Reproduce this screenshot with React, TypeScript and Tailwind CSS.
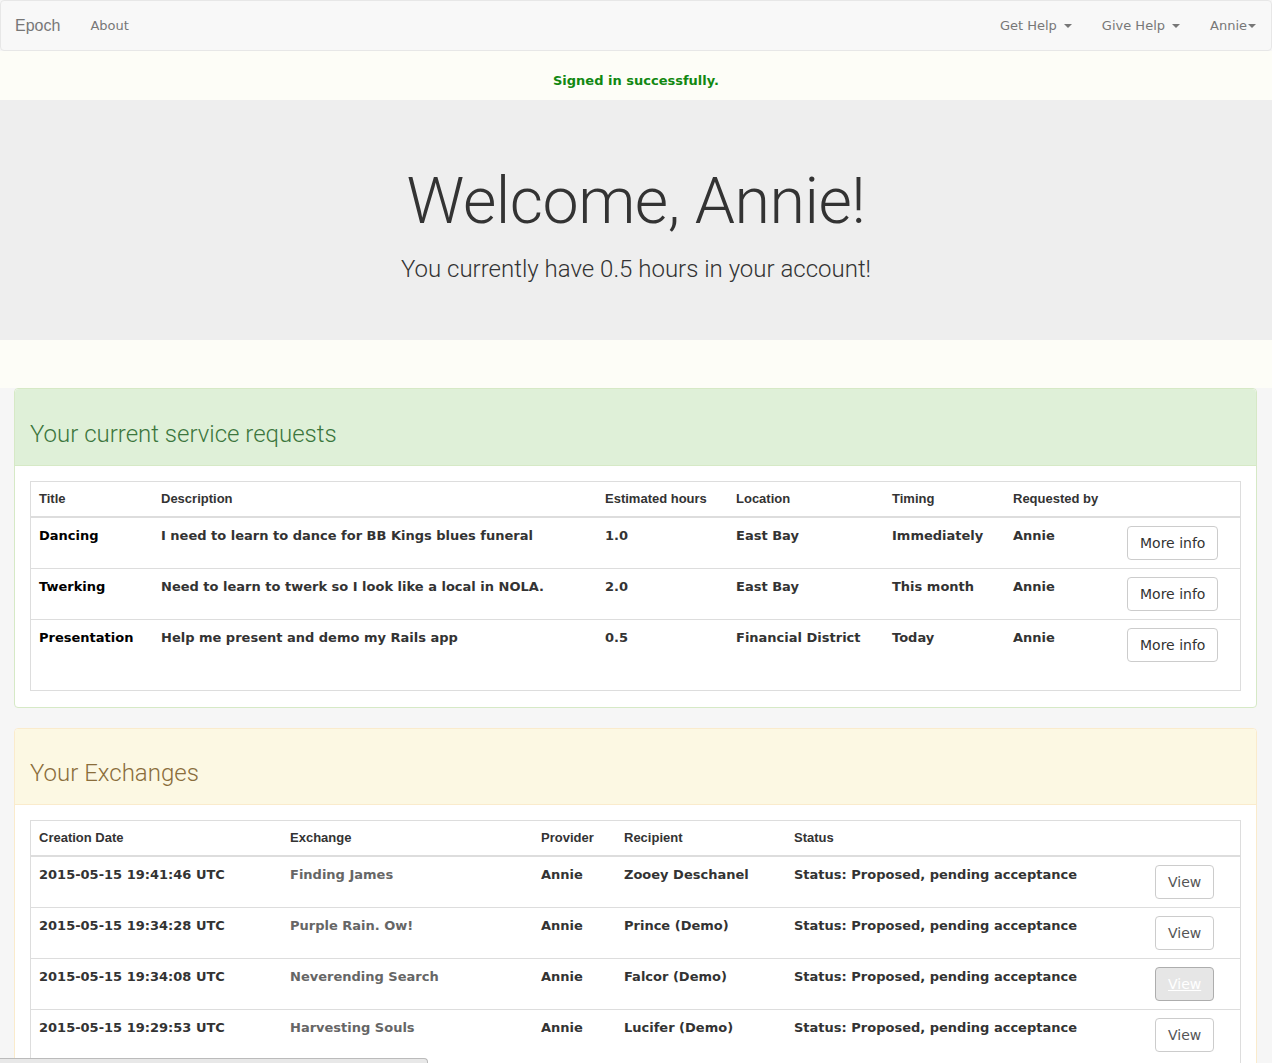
import React from 'react';

const verdana = "font-['DejaVu_Sans',Verdana,sans-serif]";
const helv = "font-['Liberation_Sans',Arial,sans-serif]";

const Caret = () => (
  <span className="ml-[7px] inline-block h-0 w-0 border-x-[4px] border-t-[4px] border-x-transparent border-t-[#777] align-middle" />
);

const requests = [
  { title: 'Dancing', desc: 'I need to learn to dance for BB Kings blues funeral', hours: '1.0', loc: 'East Bay', timing: 'Immediately', by: 'Annie' },
  { title: 'Twerking', desc: 'Need to learn to twerk so I look like a local in NOLA.', hours: '2.0', loc: 'East Bay', timing: 'This month', by: 'Annie' },
  { title: 'Presentation', desc: 'Help me present and demo my Rails app', hours: '0.5', loc: 'Financial District', timing: 'Today', by: 'Annie' },
];

const exchanges = [
  { date: '2015-05-15 19:41:46 UTC', name: 'Finding James', provider: 'Annie', recipient: 'Zooey Deschanel' },
  { date: '2015-05-15 19:34:28 UTC', name: 'Purple Rain. Ow!', provider: 'Annie', recipient: 'Prince (Demo)' },
  { date: '2015-05-15 19:34:08 UTC', name: 'Neverending Search', provider: 'Annie', recipient: 'Falcor (Demo)', active: true },
  { date: '2015-05-15 19:29:53 UTC', name: 'Harvesting Souls', provider: 'Annie', recipient: 'Lucifer (Demo)' },
];

const th = `${helv} text-left text-[13px] font-bold text-[#333] px-2 py-2 border-b-2 border-[#ddd] leading-[18px]`;
const td = `${verdana} align-top text-[13px] font-bold text-[#333] px-2 pt-[9px] pb-2 border-t border-[#ddd] leading-[18px]`;
const btnTd = 'align-top px-2 py-2 border-t border-[#ddd]';

export default function App() {
  return (
    <div className="relative min-h-[1063px] overflow-hidden bg-[#f6f6f6]">
      {/* navbar */}
      <nav className="flex h-[51px] items-center justify-between rounded border border-[#e7e7e7] bg-[#f8f8f8]">
        <div className="flex items-center">
          <span className={`${helv} pl-[14px] pr-[15px] text-[16px] text-[#777]`}>Epoch</span>
          <span className={`${verdana} px-[15px] text-[13px] text-[#777]`}>About</span>
        </div>
        <div className={`${verdana} flex items-center text-[13px] text-[#777]`}>
          <span className="px-[15px]">Get Help<Caret /></span>
          <span className="px-[15px]">Give Help<Caret /></span>
          <span className="pl-[15px] pr-[15px]">Annie<span className="ml-[1px] inline-block h-0 w-0 border-x-[4px] border-t-[4px] border-x-transparent border-t-[#777] align-middle" /></span>
        </div>
      </nav>

      <div className="bg-[#fdfdf7]">
        {/* flash */}
        <div className={`${verdana} flex h-[49px] items-center justify-center pt-[10px] text-[13px] font-bold text-[#118811]`}>
          Signed in successfully.
        </div>

        {/* jumbotron */}
        <div className="flex h-[240px] flex-col items-center bg-[#eeeeee] pt-[63px]">
          <h1 className="font-['Roboto',sans-serif] text-[64.5px] font-light leading-[76px] tracking-[-0.5px] text-[#333]">Welcome, Annie!</h1>
          <p className="mt-[15px] font-['Roboto',sans-serif] text-[24px] font-light leading-[30px] text-[#333]">You currently have 0.5 hours in your account!</p>
        </div>
        <div className="h-[48px]" />
      </div>

      <div className="pl-[14px] pr-[15px]">
        {/* service requests */}
        <section className="mb-[20px] rounded border border-[#d6e9c6] bg-white">
          <div className="flex h-[77px] items-center rounded-t border-b border-[#d6e9c6] bg-[#dff0d8] px-[15px] pt-[13px]">
            <h2 className="font-['Roboto',sans-serif] text-[24px] font-light text-[#3c763d]">Your current service requests</h2>
          </div>
          <div className="px-[15px] pt-[15px] pb-[16px]">
            <div className="border border-[#ddd] pb-[20px]">
              <table className="w-full table-fixed border-collapse">
                <colgroup>
                  <col className="w-[122px]" />
                  <col className="w-[444px]" />
                  <col className="w-[131px]" />
                  <col className="w-[156px]" />
                  <col className="w-[121px]" />
                  <col className="w-[114px]" />
                  <col />
                </colgroup>
                <thead>
                  <tr>
                    <th className={th}>Title</th>
                    <th className={th}>Description</th>
                    <th className={th}>Estimated hours</th>
                    <th className={th}>Location</th>
                    <th className={th}>Timing</th>
                    <th className={th}>Requested by</th>
                    <th className={th}></th>
                  </tr>
                </thead>
                <tbody>
                  {requests.map((r, i) => (
                    <tr key={r.title} className={i === 0 ? '[&>td]:border-t-0' : ''}>
                      <td className={`${td} text-black`}>{r.title}</td>
                      <td className={td}>{r.desc}</td>
                      <td className={td}>{r.hours}</td>
                      <td className={td}>{r.loc}</td>
                      <td className={td}>{r.timing}</td>
                      <td className={td}>{r.by}</td>
                      <td className={btnTd}>
                        <button className={`${verdana} block h-[34px] rounded border border-[#ccc] bg-white px-3 text-[14px] text-[#333]`}>More info</button>
                      </td>
                    </tr>
                  ))}
                </tbody>
              </table>
            </div>
          </div>
        </section>

        {/* exchanges */}
        <section className="rounded border border-[#faebcc] bg-white">
          <div className="flex h-[76px] items-center rounded-t border-b border-[#faebcc] bg-[#fcf8e3] px-[15px] pt-[13px]">
            <h2 className="font-['Roboto',sans-serif] text-[24px] font-light text-[#8a6d3b]">Your Exchanges</h2>
          </div>
          <div className="px-[15px] pt-[15px] pb-[16px]">
            <div className="border border-[#ddd] pb-[20px]">
              <table className="w-full table-fixed border-collapse">
                <colgroup>
                  <col className="w-[251px]" />
                  <col className="w-[251px]" />
                  <col className="w-[83px]" />
                  <col className="w-[170px]" />
                  <col className="w-[361px]" />
                  <col />
                </colgroup>
                <thead>
                  <tr>
                    <th className={th}>Creation Date</th>
                    <th className={th}>Exchange</th>
                    <th className={th}>Provider</th>
                    <th className={th}>Recipient</th>
                    <th className={th}>Status</th>
                    <th className={th}></th>
                  </tr>
                </thead>
                <tbody>
                  {exchanges.map((e, i) => (
                    <tr key={e.date} className={i === 0 ? '[&>td]:border-t-0' : ''}>
                      <td className={td}>{e.date}</td>
                      <td className={`${td} text-[#666]`}>{e.name}</td>
                      <td className={td}>{e.provider}</td>
                      <td className={td}>{e.recipient}</td>
                      <td className={td}>Status: Proposed, pending acceptance</td>
                      <td className={btnTd}>
                        {e.active ? (
                          <button className={`${verdana} block h-[34px] rounded border border-[#adadad] bg-[#e6e6e6] px-3 text-[14px] text-white underline`}>View</button>
                        ) : (
                          <button className={`${verdana} block h-[34px] rounded border border-[#ccc] bg-white px-3 text-[14px] text-[#555]`}>View</button>
                        )}
                      </td>
                    </tr>
                  ))}
                </tbody>
              </table>
            </div>
          </div>
        </section>
      </div>

      {/* browser status bar peeking at the bottom */}
      <div className="fixed bottom-0 left-0 h-[5px] w-[428px] rounded-tr border-t border-r border-[#bbb] bg-[#e8e8e8]" />
    </div>
  );
}
